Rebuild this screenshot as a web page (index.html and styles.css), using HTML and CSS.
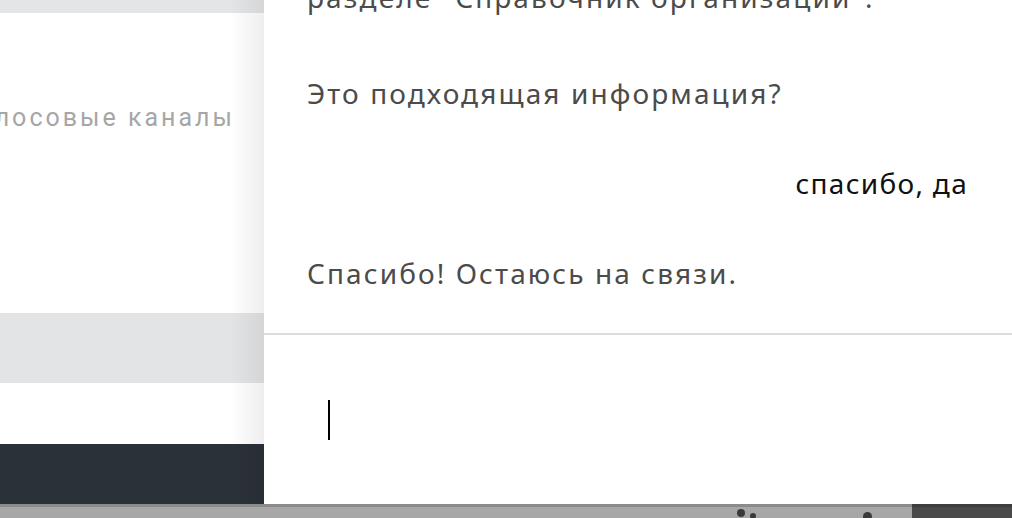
FILE: index.html
```html
<!DOCTYPE html>
<html lang="ru">
<head>
<meta charset="utf-8">
<link rel="stylesheet" href="styles.css">
</head>
<body>
<div class="screen">
  <div class="main">
    <div class="left">
      <div class="band-top"></div>
      <div class="list-area">
        <div class="channel">Голосовые каналы</div>
      </div>
      <div class="band-mid"></div>
      <div class="white-row"></div>
      <div class="dark-bar"></div>
    </div>
    <div class="chat">
      <div class="messages">
        <div class="msg bot first">разделе "Справочник организаций".</div>
        <div class="msg bot">Это подходящая информация?</div>
        <div class="msg user">спасибо, да</div>
        <div class="msg bot">Спасибо! Остаюсь на связи.</div>
      </div>
      <div class="composer">
        <span class="caret"></span>
      </div>
    </div>
  </div>
  <div class="taskbar">
    <div class="taskbar-light">
      <span class="blob b1"></span>
      <span class="blob b2"></span>
      <span class="blob b3"></span>
    </div>
    <div class="taskbar-dark"></div>
  </div>
</div>
</body>
</html>
```

FILE: styles.css
```css
html, body {
  margin: 0;
  padding: 0;
  width: 1012px;
  height: 518px;
  overflow: hidden;
  background: #ffffff;
}

.screen {
  display: flex;
  flex-direction: column;
  width: 1012px;
  height: 518px;
}

.main {
  display: flex;
  height: 504px;
  position: relative;
}

.left {
  width: 264px;
  display: flex;
  flex-direction: column;
  position: relative;
  overflow: hidden;
}

.left::after {
  content: "";
  position: absolute;
  top: 0;
  right: 0;
  bottom: 0;
  width: 34px;
  background: linear-gradient(to right, rgba(0,0,0,0), rgba(0,0,0,0.065));
  pointer-events: none;
}

.band-top {
  height: 13px;
  background: #e4e5e7;
}

.list-area {
  height: 300px;
  background: #ffffff;
}

.channel {
  margin-top: 90px;
  margin-left: -37px;
  font-family: Roboto, "Liberation Sans", sans-serif;
  font-size: 25px;
  line-height: 30px;
  color: #a6a6a6;
  white-space: nowrap;
  letter-spacing: 3px;
}

.band-mid {
  height: 70px;
  background: #e3e4e6;
}

.white-row {
  height: 61px;
  background: #ffffff;
}

.dark-bar {
  height: 60px;
  background: #2b3139;
}

.chat {
  flex: 1;
  display: flex;
  flex-direction: column;
  background: #ffffff;
}

.messages {
  height: 335px;
  display: flex;
  flex-direction: column;
  justify-content: flex-end;
  gap: 54px;
  padding: 0 45px 42px 43px;
  box-sizing: border-box;
  overflow: hidden;
  border-bottom: 2px solid #dcdcdc;
}

.msg {
  font-family: "Noto Sans", "Open Sans", sans-serif;
  font-size: 28px;
  line-height: 36px;
  letter-spacing: 2.1px;
  white-space: nowrap;
  flex-shrink: 0;
}

.msg.first {
  margin-bottom: 6px;
}

.msg.bot {
  color: #4b4b4b;
}

.msg.user {
  color: #111111;
  text-align: right;
  letter-spacing: 1.3px;
  margin-right: -1px;
}

.composer {
  flex: 1;
  padding: 65px 0 0 64px;
}

.caret {
  display: block;
  width: 2px;
  height: 40px;
  background: #000000;
}

.taskbar {
  height: 14px;
  display: flex;
}

.taskbar-light {
  width: 912px;
  background: #a7a7a7;
  border-top: 3px solid #8b8b8b;
  box-sizing: border-box;
  position: relative;
  overflow: hidden;
}

.taskbar-dark {
  flex: 1;
  background: #4a4a4a;
  border-top: 3px solid #3d3d3d;
  box-sizing: border-box;
}

.blob {
  position: absolute;
  width: 8px;
  height: 8px;
  border-radius: 50%;
  background: #3a3a3a;
}

.b1 { left: 737px; top: 2px; }
.b2 { left: 750px; top: 6px; width: 6px; height: 6px; }
.b3 { left: 863px; top: 5px; width: 9px; height: 9px; }
```
